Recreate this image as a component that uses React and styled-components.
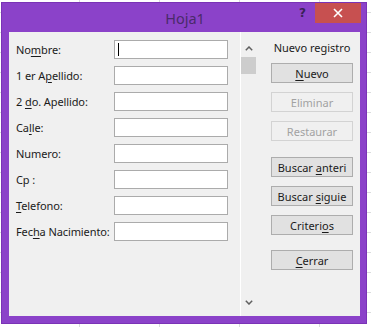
import React from 'react';
import styled, { createGlobalStyle } from 'styled-components';

const GlobalStyle = createGlobalStyle`
  html, body {
    margin: 0;
    padding: 0;
    width: 371px;
    height: 327px;
    overflow: hidden;
  }
  body {
    font-family: 'Noto Sans', 'Open Sans', sans-serif;
    background-color: #ffffff;
    background-image:
      linear-gradient(to bottom, transparent 19px, #dadcdd 19px, #dadcdd 20px),
      linear-gradient(to right, transparent 79px, #dadcdd 79px, #dadcdd 80px);
    background-size: 100% 20px, 80px 100%;
    background-position: 0 -7px, 0 0;
  }
`;

/* page holds the purple dialog window, nudged like the screenshot */
const Page = styled.div`
  padding: 2px 0 0 1px;
`;

const Window = styled.div`
  width: 366px;
  height: 322px;
  box-sizing: border-box;
  background: #8b42c9;
  border: 1px solid #7a33b6;
  display: flex;
  flex-direction: column;
`;

const TitleBar = styled.div`
  height: 29px;
  display: grid;
  grid-template-columns: 1fr auto 1fr;
  align-items: start;
`;

const Title = styled.div`
  font-size: 14.5px;
  color: #4a2a6a;
  line-height: 30px;
  padding-left: 2px;
`;

const Controls = styled.div`
  justify-self: end;
  display: flex;
  align-items: center;
  gap: 9px;
  padding-right: 5px;
`;

const Help = styled.span`
  font-family: 'DejaVu Sans', sans-serif;
  font-weight: bold;
  font-size: 12px;
  color: #3a2257;
  margin-top: -1px;
`;

const CloseButton = styled.div`
  width: 46px;
  height: 20px;
  background: #c75050;
  display: flex;
  align-items: center;
  justify-content: center;
`;

const Body = styled.div`
  flex: 1;
  margin: 0 6px 7px 7px;
  background: #f0f0f0;
  display: flex;
  font-size: 11px;
  color: #1b1b1b;
`;

const FormPane = styled.div`
  width: 231px;
  padding: 8px 0 0 7px;
  box-sizing: border-box;
  display: grid;
  grid-template-columns: 98px 114px;
  grid-auto-rows: 19px;
  row-gap: 7px;
  align-content: start;
`;

const Label = styled.label`
  display: flex;
  align-items: center;
  white-space: pre;
  letter-spacing: -0.1px;
`;

const Key = styled.span`
  text-decoration: underline;
  text-underline-offset: 2px;
`;

const Field = styled.div`
  background: #ffffff;
  border: 1px solid #ababab;
  box-sizing: border-box;
  position: relative;
`;

const Caret = styled.span`
  position: absolute;
  left: 3px;
  top: 2px;
  width: 1px;
  height: 13px;
  background: #000;
`;

const ScrollTrack = styled.div`
  width: 18px;
  border-left: 1px solid #ffffff;
  box-sizing: border-box;
  padding: 8px 0 5px;
  display: flex;
  flex-direction: column;
`;

const ArrowButton = styled.div`
  height: 17px;
  width: 15px;
  display: flex;
  align-items: center;
  justify-content: center;
`;

const Thumb = styled.div`
  height: 17px;
  width: 15px;
  background: #cdcdcd;
`;

const TrackSpace = styled.div`
  flex: 1;
`;

const ActionPane = styled.div`
  flex: 1;
  padding: 8px 7px 0 13px;
  display: flex;
  flex-direction: column;
`;

const Caption = styled.div`
  text-align: center;
  line-height: 16px;
  height: 16px;
  white-space: nowrap;
  margin-bottom: 7px;
`;

const Button = styled.div`
  height: 20px;
  box-sizing: border-box;
  margin-top: ${(p) => p.$gap}px;
  border: 1px solid ${(p) => (p.disabled ? '#d3d3d3' : '#adadad')};
  background: ${(p) => (p.disabled ? '#f0f0f0' : '#e1e1e1')};
  color: ${(p) => (p.disabled ? '#a2a2a2' : '#1b1b1b')};
  display: flex;
  align-items: center;
  justify-content: center;
  white-space: pre;
`;

const Chevron = ({ down }) => (
  <svg width="8" height="5" viewBox="0 0 8 5">
    <path
      d={down ? 'M0.8 0.8 L4 4 L7.2 0.8' : 'M0.8 4.2 L4 1 L7.2 4.2'}
      fill="none"
      stroke="#606060"
      strokeWidth="1.5"
    />
  </svg>
);

const fields = [
  [<>No<Key>m</Key>bre:</>, true],
  [<>1 er A<Key>p</Key>ellido:</>],
  [<>2 <Key>d</Key>o. Apellido:</>],
  [<>Ca<Key>l</Key>le:</>],
  [<>Numero:</>],
  [<>Cp :</>],
  [<><Key>T</Key>elefono:</>],
  [<>Fec<Key>h</Key>a Nacimiento:</>],
];

const buttons = [
  { text: <><Key>N</Key>uevo</>, gap: 0 },
  { text: 'Eliminar', gap: 9, disabled: true },
  { text: 'Restaurar', gap: 9, disabled: true },
  { text: <>Buscar <Key>a</Key>nteri</>, gap: 16 },
  { text: <>Buscar <Key>s</Key>iguie</>, gap: 9 },
  { text: <>Criteri<Key>o</Key>s</>, gap: 9 },
  { text: <><Key>C</Key>errar</>, gap: 15 },
];

export default function App() {
  return (
    <Page>
      <GlobalStyle />
      <Window>
        <TitleBar>
          <div />
          <Title>Hoja1</Title>
          <Controls>
            <Help>?</Help>
            <CloseButton>
              <svg width="10" height="10" viewBox="0 0 10 10">
                <path d="M1 1 L9 9 M9 1 L1 9" stroke="#fff" strokeWidth="1.6" />
              </svg>
            </CloseButton>
          </Controls>
        </TitleBar>
        <Body>
          <FormPane>
            {fields.map(([label, focused], i) => (
              <React.Fragment key={i}>
                <Label>
                  <span>{label}</span>
                </Label>
                <Field>{focused && <Caret />}</Field>
              </React.Fragment>
            ))}
          </FormPane>
          <ScrollTrack>
            <ArrowButton>
              <Chevron />
            </ArrowButton>
            <Thumb />
            <TrackSpace />
            <ArrowButton>
              <Chevron down />
            </ArrowButton>
          </ScrollTrack>
          <ActionPane>
            <Caption>Nuevo registro</Caption>
            {buttons.map((b, i) => (
              <Button key={i} $gap={b.gap} disabled={b.disabled}>
                <span>{b.text}</span>
              </Button>
            ))}
          </ActionPane>
        </Body>
      </Window>
    </Page>
  );
}
